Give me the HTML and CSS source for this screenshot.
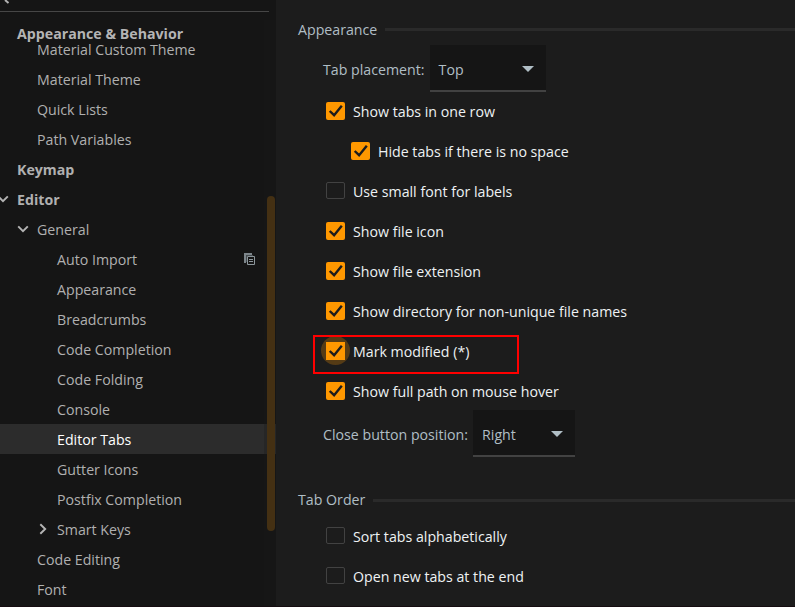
FILE: index.html
```
<!DOCTYPE html>
<html lang="en">
<head>
<meta charset="utf-8">
<title>Settings</title>
<link rel="stylesheet" href="styles.css">
</head>
<body>
<svg width="0" height="0" class="defs">
  <symbol id="check" viewBox="0 0 19 18"><path d="M3.7 9 L8.1 13.2 L15.8 3.8" fill="none" stroke="#1c1c1c" stroke-width="2.4"/></symbol>
  <symbol id="down" viewBox="0 0 12 8"><path d="M1.2 1.3 L6 6.2 L10.8 1.3" fill="none" stroke="#b4b4b4" stroke-width="1.9"/></symbol>
  <symbol id="right" viewBox="0 0 8 12"><path d="M1.3 1.2 L6.2 6 L1.3 10.8" fill="none" stroke="#b4b4b4" stroke-width="1.9"/></symbol>
</svg>
<div class="window">
  <aside class="sidebar">
    <div class="search"><svg width="10" height="4" viewBox="0 0 10 4"><path d="M5 0 L8.5 3" stroke="#b4b4b4" stroke-width="2"/></svg></div>
    <div class="sticky"><span>Appearance &amp; Behavior</span></div>
    <nav class="tree">
      <div class="row l2"><span class="t">Material Custom Theme</span></div>
      <div class="row l2"><span class="t">Material Theme</span></div>
      <div class="row l2"><span class="t">Quick Lists</span></div>
      <div class="row l2"><span class="t">Path Variables</span></div>
      <div class="row l1"><span class="t">Keymap</span></div>
      <div class="row l1"><svg class="arrow" width="12" height="8"><use href="#down"/></svg><span class="t">Editor</span></div>
      <div class="row l2"><svg class="arrow" width="12" height="8"><use href="#down"/></svg><span class="t">General</span></div>
      <div class="row l3"><span class="t">Auto Import</span>
        <svg class="copy" width="12" height="12" viewBox="0 0 12 12"><path d="M0 0h8v3H2v7H0z" fill="#7d868b"/><path d="M2 2h7v1H3v6H2z" fill="#444a4d"/><path d="M3.5 3.5h7v8h-7z" fill="#151515" stroke="#8c969b"/><path d="M5 6.5h4M5 8.5h4" stroke="#8c969b"/></svg>
      </div>
      <div class="row l3"><span class="t">Appearance</span></div>
      <div class="row l3"><span class="t">Breadcrumbs</span></div>
      <div class="row l3"><span class="t">Code Completion</span></div>
      <div class="row l3"><span class="t">Code Folding</span></div>
      <div class="row l3"><span class="t">Console</span></div>
      <div class="row l3 selected"><span class="t">Editor Tabs</span></div>
      <div class="row l3"><span class="t">Gutter Icons</span></div>
      <div class="row l3"><span class="t">Postfix Completion</span></div>
      <div class="row l3"><svg class="arrow side" width="8" height="12"><use href="#right"/></svg><span class="t">Smart Keys</span></div>
      <div class="row l2"><span class="t">Code Editing</span></div>
      <div class="row l2"><span class="t">Font</span></div>
    </nav>
    <div class="track"><div class="thumb"></div></div>
  </aside>
  <main class="panel">
    <h2 class="group"><span class="t">Appearance</span></h2>
    <div class="field"><label class="t">Tab placement:</label><div class="select top"><span>Top</span><i class="caret"></i></div></div>
    <div class="options">
      <div class="option"><span class="box on"><svg><use href="#check"/></svg></span><span class="t">Show tabs in one row</span></div>
      <div class="option nested"><span class="box on"><svg><use href="#check"/></svg></span><span class="t">Hide tabs if there is no space</span></div>
      <div class="option"><span class="box"></span><span class="t">Use small font for labels</span></div>
      <div class="option"><span class="box on"><svg><use href="#check"/></svg></span><span class="t">Show file icon</span></div>
      <div class="option"><span class="box on"><svg><use href="#check"/></svg></span><span class="t">Show file extension</span></div>
      <div class="option"><span class="box on"><svg><use href="#check"/></svg></span><span class="t">Show directory for non-unique file names</span></div>
      <div class="option marked"><span class="box on focus"><svg><use href="#check"/></svg></span><span class="t">Mark modified (*)</span></div>
      <div class="option"><span class="box on"><svg><use href="#check"/></svg></span><span class="t">Show full path on mouse hover</span></div>
    </div>
    <div class="field close"><label class="t">Close button position:</label><div class="select right"><span>Right</span><i class="caret"></i></div></div>
    <h2 class="group second"><span>Tab Order</span></h2>
    <div class="options order">
      <div class="option"><span class="box"></span><span>Sort tabs alphabetically</span></div>
      <div class="option"><span class="box"></span><span>Open new tabs at the end</span></div>
    </div>
  </main>
</div>
</body>
</html>
```
FILE: styles.css
```
*, *::before, *::after { box-sizing: border-box; }
body { margin: 0; background: #1c1c1c; font: 14.2px/20px "Open Sans", sans-serif; color: #b0b0b0; overflow: hidden; }
svg { display: block; }
.defs { position: absolute; }
.window { display: flex; width: 795px; height: 607px; overflow: hidden; border-bottom: 1px solid #150c10; }
.sidebar { position: relative; width: 276px; flex: none; background: #151515; }
.t { padding-top: 2px; }
.search { height: 12px; width: 269px; border-bottom: 1px solid #464646; }
.sticky { height: 32px; padding: 12px 0 0 17px; font-weight: 700; color: #b4b4b4; position: relative; z-index: 1; background: #151515; width: 264px; }
.tree { margin-top: -10px; }
.row { height: 30px; display: flex; align-items: center; position: relative; white-space: nowrap; }
.l1 { padding-left: 17px; font-weight: 700; }
.l2 { padding-left: 37px; }
.l3 { padding-left: 57px; }
.arrow { width: 12px; margin: 0 8px 0 -20px; }
.side { width: 8px; margin: 0 10px 0 -18px; }
.copy { margin-left: auto; margin-right: 20px; }
.selected { background: #2c2c2c; color: #fff; }
.track { position: absolute; left: 264px; top: 20px; width: 12px; height: 587px; background: rgba(28,28,28,.3); }
.thumb { width: 8px; height: 335px; margin: 176px 0 0 3px; border-radius: 4px; background: #443013; }
.panel { flex: 1; padding-top: 19px; color: #b0bec5; }
.group { margin: 0 0 0 22px; height: 20px; font: inherit; display: flex; align-items: center; gap: 8px; }
.group::after { content: ""; flex: 1; height: 3px; background: #2a2a2a; }
.field { display: flex; align-items: center; height: 47px; margin: 6px 0 0 47px; gap: 5px; white-space: nowrap; }
.select { display: flex; align-items: center; justify-content: space-between; height: 47px; padding: 4px 12px 0 9px; background: #151515; border-bottom: 2px solid #424242; }
.top { width: 116px; }
.right { width: 102px; }
.caret { width: 0; height: 0; border: 6px solid transparent; border-top-color: #b0bec5; border-bottom: 0; margin-top: -2px; }
.options { margin-top: -1px; }
.option { display: flex; align-items: center; height: 40px; padding-left: 50px; gap: 8px; color: #eef2f4; white-space: nowrap; position: relative; }
.nested { padding-left: 75px; }
.box { width: 19px; height: 17px; border: 1px solid #424242; border-radius: 2px; margin-top: -1px; position: relative; }
.on { height: 18px; border: 0; background: #ff9800; margin-top: 0; }
.on svg { width: 19px; height: 18px; position: relative; }
.focus::before { content: ""; position: absolute; left: -5px; top: -6px; width: 29px; height: 29px; border-radius: 50%; background: rgba(255,152,0,.25); }
.focus::after { content: ""; position: absolute; inset: 0; background: #ff9800; }
.focus svg { z-index: 1; }
.marked::after { content: ""; position: absolute; left: 37px; top: 4px; width: 206px; height: 39px; border: 2px solid #f00; }
.close { margin-top: -1px; }
.second { margin-top: 33px; }
.order { margin-top: 7px; }
.order .box { margin-top: -3px; }
```
